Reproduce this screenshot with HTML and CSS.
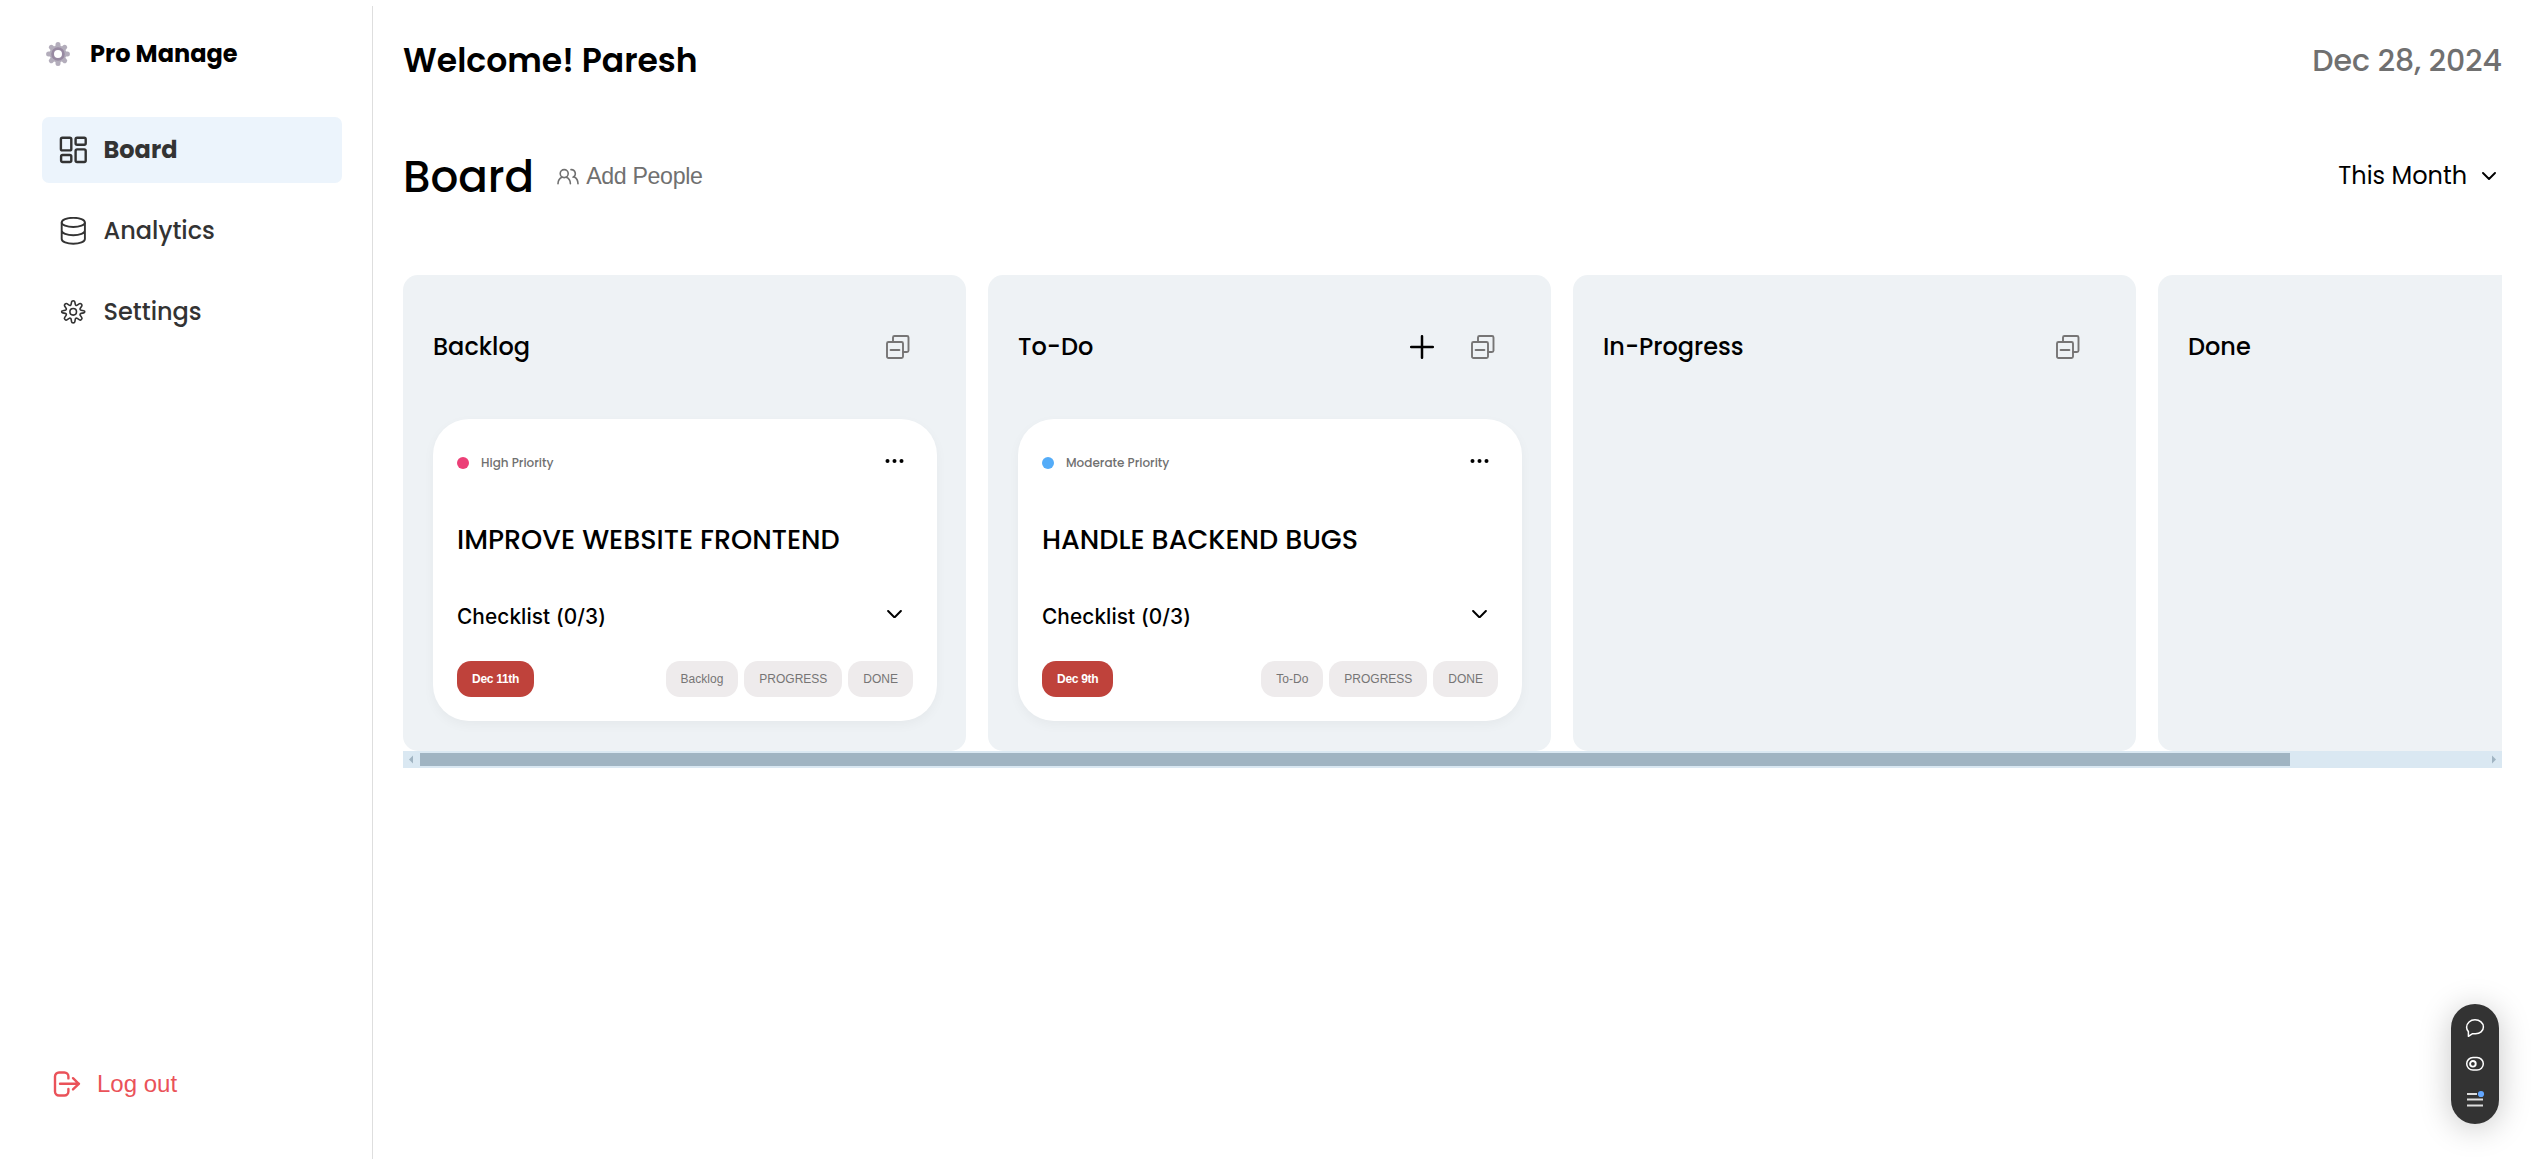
FILE: index.html
```html
<!DOCTYPE html>
<html lang="en">
<head>
<meta charset="utf-8">
<title>Pro Manage</title>
<link rel="stylesheet" href="styles.css">
</head>
<body>
<svg class="sprite" width="0" height="0">
  <symbol id="collapse" viewBox="0 0 24 24">
    <g fill="none" stroke="#767575" stroke-width="1.9" stroke-linejoin="round" stroke-linecap="round">
      <path d="M7 6.5V2.5a1.5 1.5 0 0 1 1.5-1.5h12.5a1.5 1.5 0 0 1 1.5 1.5v13a1.5 1.5 0 0 1-1.5 1.500h-4"/>
      <rect x="1" y="7" width="16" height="16" rx="1.5"/>
      <path d="M4.6 15h8.8"/>
    </g>
  </symbol>
  <symbol id="dots" viewBox="0 0 18 4">
    <circle cx="2" cy="2" r="2"/><circle cx="9" cy="2" r="2"/><circle cx="16" cy="2" r="2"/>
  </symbol>
  <symbol id="chevron" viewBox="0 0 14 8">
    <path d="M1 1l6 6 6-6" fill="none" stroke="#000" stroke-width="1.9" stroke-linecap="round" stroke-linejoin="round"/>
  </symbol>
</svg>
<div class="app">
  <aside class="sidebar">
    <div class="brand">
      <svg width="24" height="24" viewBox="0 0 24 24">
        <g stroke="#b3adbb" stroke-width="5" stroke-linecap="round">
          <path d="M12 2.6v18.8M2.6 12h18.8M5.3 5.3l13.4 13.4M18.7 5.3L5.3 18.7"/>
        </g>
        <circle cx="12" cy="12" r="8.4" fill="#b3adbb"/>
        <circle cx="12" cy="12" r="5.4" fill="#fff" stroke="#988aa2" stroke-width="2.8"/>
      </svg>
      <span class="brand-name">Pro Manage</span>
    </div>
    <nav class="nav">
      <a class="nav-item nav-item-active">
        <svg width="28" height="28" viewBox="0 0 28 28" fill="none" stroke="#333" stroke-width="2.4">
          <rect x="1.9" y="1.8" width="10.4" height="12.6" rx="1.5"/>
          <rect x="16.6" y="1.8" width="10.1" height="7" rx="1.5"/>
          <rect x="2.1" y="19" width="10.2" height="7" rx="1.5"/>
          <rect x="16.6" y="13.4" width="10.1" height="12.6" rx="1.5"/>
        </svg>
        <span>Board</span>
      </a>
      <a class="nav-item">
        <svg width="28" height="28" viewBox="0 0 28 28" fill="none" stroke="#333" stroke-width="1.9">
          <ellipse cx="14.3" cy="5.4" rx="11.6" ry="4.6"/>
          <path d="M2.7 5.4v16.6c0 2.7 5.2 4.800 11.6 4.800s11.6-2.100 11.6-4.800V5.4M2.7 13.500c0 2.700 5.200 4.800 11.600 4.800s11.600-2.100 11.600-4.800"/>
        </svg>
        <span>Analytics</span>
      </a>
      <a class="nav-item">
        <svg width="28" height="28" viewBox="0 0 28 28" fill="none" stroke="#333" stroke-width="1.6" stroke-linejoin="round">
          <circle cx="14.2" cy="13.800" r="3.3"/>
          <path transform="translate(0 -.4)" d="M12.6 4.2c.2-1.4 3-1.4 3.2 0l.5 2.6c.2 1 1.2 1.4 2 .8l2.200-1.500c1.200-.8 3.100 1.100 2.300 2.300l-1.500 2.200c-.6.9-.2 1.800.8 2l2.600.5c1.400.2 1.400 2 0 2.200l-2.600.5c-1 .2-1.400 1.200-.8 2l1.500 2.200c.8 1.200-1.100 3.100-2.300 2.300l-2.200-1.500c-.9-.6-1.800-.2-2 .8l-.5 2.600c-.2 1.400-3 1.400-3.200 0l-.5-2.600c-.2-1-1.200-1.400-2-.8l-2.200 1.500c-1.200.8-3.100-1.100-2.300-2.300l1.500-2.200c.6-.9.2-1.800-.8-2l-2.600-.5c-1.400-.2-1.400-2 0-2.200l2.600-.5c1-.2 1.400-1.200.8-2l-1.500-2.200c-.8-1.200 1.100-3.100 2.300-2.300l2.200 1.500c.9.6 1.800.2 2-.8z"/>
        </svg>
        <span>Settings</span>
      </a>
    </nav>
    <a class="logout">
      <svg width="28" height="26" viewBox="0 0 28 26" fill="none" stroke="#ea5259" stroke-width="2.4" stroke-linecap="round" stroke-linejoin="round">
        <path d="M15.400 7.400V5.500a4 4 0 0 0-4-4H6a4 4 0 0 0-4 4v15a4 4 0 0 0 4 4h5.400a4 4 0 0 0 4-4V18"/>
        <path d="M7 12.800h19M20 7.200l5.800 5.600-5.800 5.600"/>
      </svg>
      <span>Log out</span>
    </a>
  </aside>

  <main class="main">
    <header class="topbar">
      <h2 class="welcome">Welcome! Paresh</h2>
      <span class="date">Dec 28, 2024</span>
    </header>
    <div class="subbar">
      <div class="subbar-left">
        <h1 class="page-title">Board</h1>
        <button class="add-people">
          <svg width="22" height="17" viewBox="0 0 22 17" fill="none" stroke="#707070" stroke-width="1.6" stroke-linecap="round" stroke-linejoin="round">
            <circle cx="7.200" cy="5.600" r="4"/>
            <path d="M1 15.800c0-3.600 2-5.800 4.200-6.600M13.400 15.800c0-3.600-2-5.800-4.200-6.600"/>
            <path d="M14 1.600a4 4 0 0 1 2 7.600M17.400 9c2 1.200 3.600 3 3.600 6.800"/>
          </svg>
          <span>Add People</span>
        </button>
      </div>
      <div class="filter">
        <span>This Month</span>
        <svg width="14" height="8"><use href="#chevron"/></svg>
      </div>
    </div>

    <div class="board">
      <div class="columns">
        <section class="column">
          <div class="column-head">
            <h3>Backlog</h3>
            <svg width="24" height="24"><use href="#collapse"/></svg>
          </div>
          <article class="card">
            <div class="card-top">
              <span class="dot dot-high"></span>
              <span class="priority">High Priority</span>
              <svg class="more" width="19" height="4"><use href="#dots"/></svg>
            </div>
            <h4 class="card-title">IMPROVE WEBSITE FRONTEND</h4>
            <div class="checklist">
              <span>Checklist (0/3)</span>
              <svg width="15" height="8.500"><use href="#chevron"/></svg>
            </div>
            <div class="card-foot">
              <span class="pill pill-due">Dec 11th</span>
              <div class="moves"><span class="pill">Backlog</span><span class="pill">PROGRESS</span><span class="pill">DONE</span></div>
            </div>
          </article>
        </section>
        <section class="column">
          <div class="column-head">
            <h3>To-Do</h3>
            <svg width="24" height="24" viewBox="0 0 24 24"><path d="M12 1.200v21.600M1.200 12h21.600" stroke="#000" stroke-width="2.500" stroke-linecap="round"/></svg>
            <svg width="24" height="24"><use href="#collapse"/></svg>
          </div>
          <article class="card">
            <div class="card-top">
              <span class="dot dot-moderate"></span>
              <span class="priority">Moderate Priority</span>
              <svg class="more" width="19" height="4"><use href="#dots"/></svg>
            </div>
            <h4 class="card-title">HANDLE BACKEND BUGS</h4>
            <div class="checklist">
              <span>Checklist (0/3)</span>
              <svg width="15" height="8.500"><use href="#chevron"/></svg>
            </div>
            <div class="card-foot">
              <span class="pill pill-due">Dec 9th</span>
              <div class="moves"><span class="pill">To-Do</span><span class="pill">PROGRESS</span><span class="pill">DONE</span></div>
            </div>
          </article>
        </section>
        <section class="column">
          <div class="column-head">
            <h3>In-Progress</h3>
            <svg width="24" height="24"><use href="#collapse"/></svg>
          </div>
        </section>
        <section class="column">
          <div class="column-head">
            <h3>Done</h3>
            <svg width="24" height="24"><use href="#collapse"/></svg>
          </div>
        </section>
      </div>
      <div class="scrollbar">
        <svg width="17" height="17" viewBox="0 0 17 17"><path d="M10 4.500v8l-4-4z" fill="#a0b4c2"/></svg>
        <div class="thumb"></div>
        <svg width="17" height="17" viewBox="0 0 17 17"><path d="M7 4.500v8l4-4z" fill="#a0b4c2"/></svg>
      </div>
    </div>
  </main>
</div>

<div class="toolbar">
  <svg width="20" height="20" viewBox="0 0 20 20" fill="none" stroke="#fff" stroke-width="1.500" stroke-linejoin="round">
    <path d="M3.400 18.300V13.600C2.200 12.400 1.600 11 1.600 9.300c0-4.200 3.700-7.500 8.400-7.500s8.400 3.100 8.400 7.100-3.500 6.900-7.900 6.900H7.200z"/>
  </svg>
  <svg width="20" height="16" viewBox="0 -.8 20 16" fill="none" stroke="#fff">
    <rect x="1.700" y="1.700" width="16.600" height="12.600" rx="6.300" stroke-width="1.500"/>
    <circle cx="7.900" cy="8" r="2.800" stroke-width="1.900"/>
  </svg>
  <svg width="20" height="20" viewBox="0 0 20 20">
    <path d="M2 6h10M2 11.500h16M2 17.500h16" stroke="#ddd" stroke-width="2"/>
    <circle cx="16" cy="6" r="3.100" fill="#62a6ff"/>
  </svg>
</div>
</body>
</html>
```
FILE: styles.css
```css
* { box-sizing: border-box; }

body {
  margin: 0;
  background: #fff;
  font-family: Poppins, Inter, sans-serif;
  color: #000;
  overflow: hidden;
}

h1, h2, h3, h4 { margin: 0; }
svg { display: block; flex: none; }
.sprite { position: absolute; }
span, h1, h2, h3, h4 { white-space: nowrap; }

.app { display: flex; height: 1159px; padding-top: 6px; }

/* Sidebar */
.sidebar {
  display: flex;
  flex-direction: column;
  flex: none;
  width: 373px;
  padding: 32px 30px 60px 42px;
  border-right: 1px solid #dedede;
}

.brand { display: flex; align-items: center; gap: 19px; height: 31px; padding-left: 4px; }
.brand-name { padding-left: 1px; font-size: 24px; font-weight: 700; }

.nav { display: flex; flex-direction: column; gap: 15px; margin-top: 48px; }
.nav-item {
  display: flex;
  align-items: center;
  gap: 17px;
  height: 66px;
  padding-left: 16.500px;
  border-radius: 7px;
  font-size: 24px;
  font-weight: 500;
  color: #333;
}
.nav-item span { padding-bottom: 1px; }
.nav-item-active { background: #ecf4fc; font-weight: 700; }

.logout {
  display: flex;
  align-items: center;
  gap: 16px;
  height: 30px;
  margin-top: auto;
  padding-left: 11px;
  font: 24px "Liberation Sans", Arial, sans-serif;
  color: #ea5259;
}

/* Main */
.main { flex: 1; min-width: 0; padding: 34px 31px 0 30px; }

.topbar, .subbar { display: flex; align-items: center; justify-content: space-between; }
.topbar { height: 42px; }
.welcome { font-size: 33px; font-weight: 600; }
.date { padding-bottom: 1px; font-size: 30px; font-weight: 500; color: #707070; }

.subbar { height: 50px; margin-top: 69px; }
.subbar-left { display: flex; align-items: center; gap: 23px; }
.page-title { font-size: 43.600px; font-weight: 500; }
.add-people {
  display: flex;
  align-items: center;
  gap: 7px;
  padding: 0;
  border: 0;
  background: none;
  font: 23.200px "Liberation Sans", Arial, sans-serif;
  letter-spacing: -.350px;
  color: #707070;
}
.filter { display: flex; align-items: center; gap: 15px; padding: 0 6px 1px 0; font-size: 24px; }

/* Board */
.board { margin-top: 74px; }
.columns { display: flex; gap: 22px; overflow: hidden; }
.column {
  flex: none;
  width: 563px;
  height: 476px;
  padding: 48px 29px 0 30px;
  border-radius: 15px;
  background: #eef2f5;
}
.column-head { display: flex; align-items: center; gap: 37px; height: 48px; padding-right: 27px; }
.column-head h3 { flex: 1; padding-bottom: 2px; font-size: 24px; font-weight: 500; }

.card {
  display: flex;
  flex-direction: column;
  height: 302px;
  margin-top: 48px;
  padding: 34px 24px 24px;
  border-radius: 36px;
  background: #fff;
  box-shadow: 0 4px 12px rgba(0, 0, 0, .04);
}
.card-top { display: flex; align-items: center; height: 20px; }
.dot { width: 12px; height: 12px; margin-right: 12px; border-radius: 50%; }
.dot-high { background: #ec3f77; }
.dot-moderate { background: #54acf8; }
.priority { font-size: 12px; font-weight: 500; color: #707070; }
.more { margin: 0 9px 4px auto; }
.card-title { height: 40px; margin-top: 47px; font-size: 27px; line-height: 40px; font-weight: 500; }
.checklist {
  display: flex;
  align-items: center;
  justify-content: space-between;
  height: 30px;
  margin-top: 41px;
  padding-right: 11px;
  font-family: Inter, sans-serif;
  font-size: 20.800px;
  font-weight: 500;
  letter-spacing: .1px;
}
.checklist svg { margin-bottom: 4px; }
.card-foot { display: flex; justify-content: space-between; margin-top: auto; }
.moves { display: flex; gap: 6px; }
.pill {
  height: 36px;
  padding: 0 15px;
  border-radius: 14px;
  background: #eeebec;
  font: 12px/36px "Liberation Sans", Arial, sans-serif;
  color: #767575;
}
.pill-due { background: #bf423b; color: #fff; font-weight: 700; letter-spacing: -.28px; }

.scrollbar { display: flex; align-items: center; height: 17px; background: #dae8f2; }
.thumb { width: 1870px; height: 13px; margin-right: auto; background: #a0b4c2; }

/* Floating toolbar */
.toolbar {
  position: fixed;
  right: 34px;
  bottom: 35px;
  display: flex;
  flex-direction: column;
  align-items: center;
  justify-content: space-between;
  width: 48px;
  height: 120px;
  padding: 14px 0 16px;
  border-radius: 24px;
  background: #333;
  box-shadow: 0 4px 32px rgba(0, 0, 0, .22);
}
```
